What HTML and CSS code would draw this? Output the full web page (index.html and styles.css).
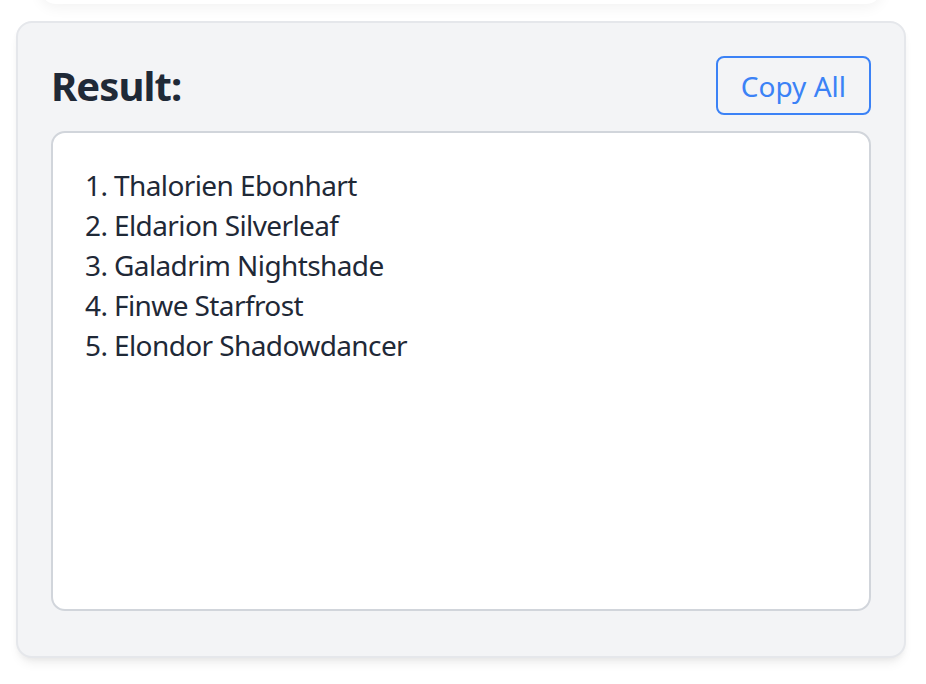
FILE: index.html
```html
<!DOCTYPE html>
<html>
<head>
<meta charset="utf-8">
<link rel="stylesheet" href="styles.css">
</head>
<body>
<div class="page">
  <div class="prev-card"></div>
  <section class="card">
    <div class="card-head">
      <h2 class="title">Result:</h2>
      <button class="copy-btn">Copy All</button>
    </div>
    <div class="result-box">
      <ol class="names">
        <li>1. Thalorien Ebonhart</li>
        <li>2. Eldarion Silverleaf</li>
        <li>3. Galadrim Nightshade</li>
        <li>4. Finwe Starfrost</li>
        <li>5. Elondor Shadowdancer</li>
      </ol>
    </div>
  </section>
</div>
</body>
</html>
```

FILE: styles.css
```css
* { box-sizing: border-box; }
html, body {
  margin: 0;
  padding: 0;
  background: #ffffff;
  font-family: "Noto Sans", "Open Sans", sans-serif;
  color: #1f2937;
}
.page {
  padding: 0 20px 0 16px;
  height: 684px;
  overflow: hidden;
}
.prev-card {
  height: 4px;
  margin: -40px 24px 0 24px;
  padding-top: 40px;
  box-sizing: content-box;
  border-radius: 16px;
  background: #ffffff;
  box-shadow: 0 4px 14px rgba(0, 0, 0, 0.05);
  position: relative;
  z-index: 1;
}
.card {
  margin-top: 17px;
  height: 637px;
  background: #f3f4f6;
  border: 2px solid #e5e7eb;
  border-radius: 16px;
  box-shadow: 0 8px 12px -4px rgba(0, 0, 0, 0.08), 0 3px 6px -2px rgba(0, 0, 0, 0.05);
  padding: 33px 33px 45px 33px;
  display: flex;
  flex-direction: column;
}
.card-head {
  display: flex;
  justify-content: space-between;
  align-items: center;
  margin-bottom: 16px;
}
.title {
  margin: 0;
  font-size: 40px;
  line-height: 56px;
  font-weight: 700;
  letter-spacing: -0.9px;
  color: #1f2937;
}
.copy-btn {
  font-family: inherit;
  font-size: 28px;
  line-height: 40px;
  color: #3b82f6;
  background: transparent;
  border: 2px solid #3b82f6;
  border-radius: 8px;
  padding: 7px 23px;
  height: 59px;
  cursor: pointer;
}
.result-box {
  flex: 1;
  background: #ffffff;
  border: 2px solid #d1d5db;
  border-radius: 14px;
  padding: 32px 32px;
}
.names {
  list-style: none;
  margin: 0;
  padding: 0;
  font-size: 28px;
  line-height: 40px;
  letter-spacing: -0.6px;
  color: #1f2937;
}
```
